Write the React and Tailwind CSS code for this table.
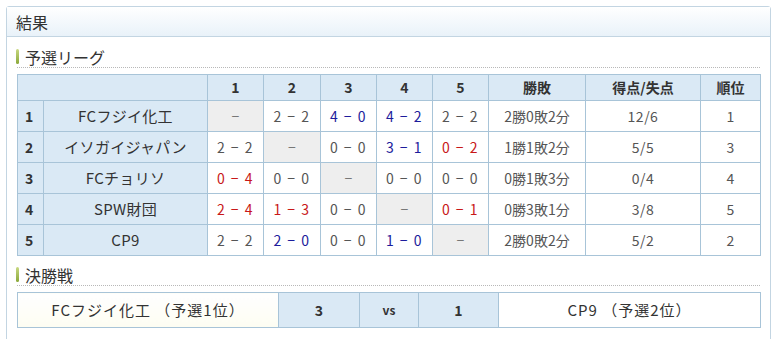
import React from "react";

const teams = [
  { n: 1, name: "FCフジイ化工", s: [null, ["2 − 2", "d"], ["4 − 0", "w"], ["4 − 2", "w"], ["2 − 2", "d"]], r: "2勝0敗2分", p: "12/6", rank: 1 },
  { n: 2, name: "イソガイジャパン", s: [["2 − 2", "d"], null, ["0 − 0", "d"], ["3 − 1", "w"], ["0 − 2", "l"]], r: "1勝1敗2分", p: "5/5", rank: 3 },
  { n: 3, name: "FCチョリソ", s: [["0 − 4", "l"], ["0 − 0", "d"], null, ["0 − 0", "d"], ["0 − 0", "d"]], r: "0勝1敗3分", p: "0/4", rank: 4 },
  { n: 4, name: "SPW財団", s: [["2 − 4", "l"], ["1 − 3", "l"], ["0 − 0", "d"], null, ["0 − 1", "l"]], r: "0勝3敗1分", p: "3/8", rank: 5 },
  { n: 5, name: "CP9", s: [["2 − 2", "d"], ["2 − 0", "w"], ["0 − 0", "d"], ["1 − 0", "w"], null], r: "2勝0敗2分", p: "5/2", rank: 2 },
];

const color = { w: "text-[#1c1c9c]", l: "text-[#c81818]", d: "text-[#555]" };

function Heading({ children }) {
  return (
    <div className="flex items-center h-[22px] border-b border-dotted border-[#b8b8b8]">
      <span className="w-[3px] h-[15px] rounded-full bg-gradient-to-b from-[#c8d880] to-[#8aa838] mr-[6px] ml-[-1px]" />
      <span className="text-[16px] text-[#333] leading-none">{children}</span>
    </div>
  );
}

export default function App() {
  const bc = "border border-[#a8c4d8]";
  return (
    <div className="w-[779px] h-[339px] overflow-hidden bg-white pt-[6px] pl-[6px] font-['Noto_Sans_CJK_JP','Noto_Sans',sans-serif]">
      <div className="w-[765px] h-[400px] border border-[#c3d5e2] rounded-t-[3px]">
        <div className="h-[30px] border-b border-[#c3d5e2] bg-gradient-to-b from-white to-[#e9f2f9] flex items-center pl-[9px] text-[16px] text-[#333]">
          結果
        </div>
        <div className="px-[10px]">
          <div className="mt-[9px]">
            <Heading>予選リーグ</Heading>
          </div>
          <table className="mt-[6px] w-[743px] border-collapse table-fixed text-[14px] text-[#333]">
            <colgroup>
              <col className="w-[26px]" />
              <col className="w-[164px]" />
              <col className="w-[56px]" />
              <col className="w-[57px]" />
              <col className="w-[56px]" />
              <col className="w-[56px]" />
              <col className="w-[56px]" />
              <col className="w-[97px]" />
              <col className="w-[115px]" />
              <col className="w-[60px]" />
            </colgroup>
            <thead>
              <tr className="h-[26px] bg-[#dae9f5]">
                <th className={bc} colSpan={2}></th>
                {[1, 2, 3, 4, 5].map((i) => (
                  <th key={i} className={`${bc} font-bold`}>{i}</th>
                ))}
                <th className={`${bc} font-bold`}>勝敗</th>
                <th className={`${bc} font-bold`}>得点/失点</th>
                <th className={`${bc} font-bold`}>順位</th>
              </tr>
            </thead>
            <tbody>
              {teams.map((t) => (
                <tr key={t.n} className="h-[31px]">
                  <td className={`${bc} bg-[#dae9f5] pl-[7px] font-bold`}>{t.n}</td>
                  <td className={`${bc} bg-[#dae9f5] text-center text-[15px] tracking-[0.3px]`}>{t.name}</td>
                  {t.s.map((c, i) =>
                    c ? (
                      <td key={i} className={`${bc} bg-white text-center tracking-[1.5px] ${color[c[1]]}`}>{c[0]}</td>
                    ) : (
                      <td key={i} className={`${bc} bg-[#eeeeee] text-center text-[#777]`}>−</td>
                    )
                  )}
                  <td className={`${bc} bg-white text-center text-[#555]`}>{t.r}</td>
                  <td className={`${bc} bg-white text-center text-[#555] tracking-[0.5px]`}>{t.p}</td>
                  <td className={`${bc} bg-white text-center text-[#555]`}>{t.rank}</td>
                </tr>
              ))}
            </tbody>
          </table>
          <div className="mt-[8px]">
            <Heading>決勝戦</Heading>
          </div>
          <table className="mt-[6px] w-[743px] border-collapse table-fixed text-[14px] text-[#333]">
            <colgroup>
              <col className="w-[261px]" />
              <col className="w-[81px]" />
              <col className="w-[59px]" />
              <col className="w-[80px]" />
              <col className="w-[262px]" />
            </colgroup>
            <tbody>
              <tr className="h-[35px]">
                <td className={`${bc} bg-gradient-to-b from-white to-[#fdfdf2] text-center text-[15px] tracking-[1px]`}>FCフジイ化工 （予選1位）</td>
                <td className={`${bc} bg-[#dae9f5] text-center font-bold`}>3</td>
                <td className={`${bc} bg-[#dae9f5] text-center font-bold text-[12px]`}>vs</td>
                <td className={`${bc} bg-[#dae9f5] text-center font-bold`}>1</td>
                <td className={`${bc} bg-white text-center text-[15px] tracking-[1px]`}>CP9 （予選2位）</td>
              </tr>
            </tbody>
          </table>
        </div>
      </div>
    </div>
  );
}
